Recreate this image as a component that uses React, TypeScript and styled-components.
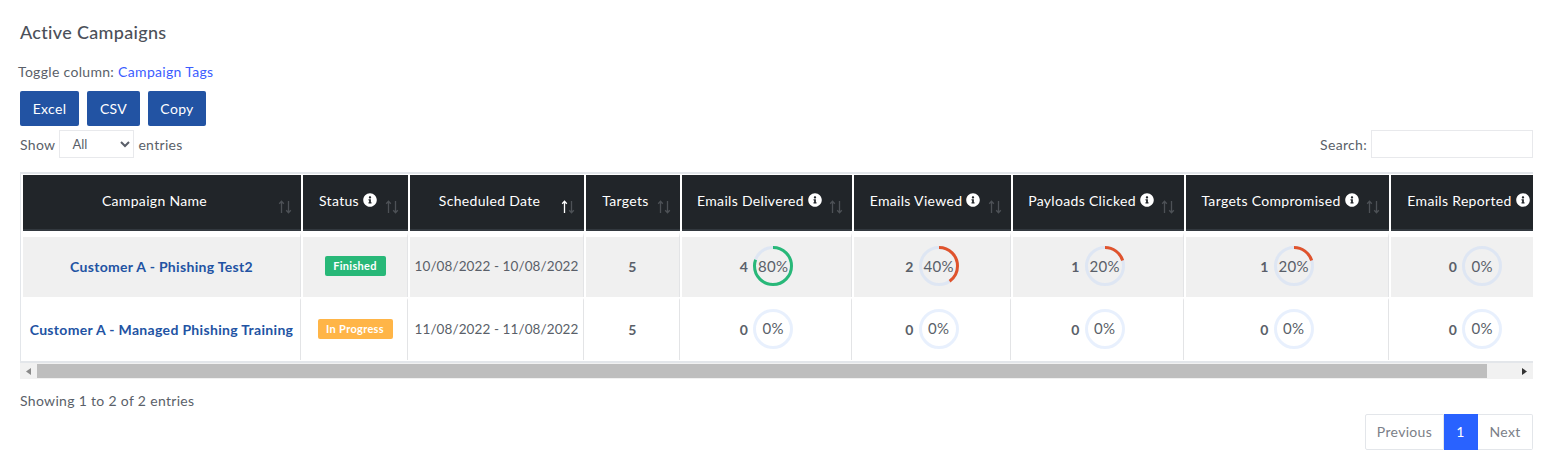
import React from 'react';
import styled, { createGlobalStyle } from 'styled-components';
import { FaInfoCircle } from 'react-icons/fa';

const GlobalStyle = createGlobalStyle`
  html, body {
    margin: 0;
    background: #fff;
  }
  body {
    font-family: Lato, "Liberation Sans", sans-serif;
    font-size: 14px;
    letter-spacing: 0.32px;
    color: #5a5f69;
  }
`;

const Page = styled.div`
  padding: 21px 18px 0 20px;
`;

const Title = styled.h2`
  margin: 0;
  font-size: 18px;
  line-height: 22px;
  font-weight: 500;
  color: #4b5059;
`;

const ToggleRow = styled.div`
  margin: 19px 0 0 -2px;
  line-height: 20px;
`;

const ToggleLink = styled.a`
  color: #3b5cff;
`;

const ButtonRow = styled.div`
  display: flex;
  gap: 8px;
  margin-top: 9px;
`;

const ExportButton = styled.button<{ $width: number }>`
  width: ${p => p.$width}px;
  height: 35px;
  padding: 0;
  border: 0;
  border-radius: 2px;
  background: #2253a3;
  color: #fff;
  font: inherit;
  letter-spacing: inherit;
`;

const Controls = styled.div`
  display: flex;
  justify-content: space-between;
  align-items: center;
  height: 28px;
  margin-top: 4px;
`;

const Label = styled.label`
  display: flex;
  align-items: center;
  gap: 4px;
`;

const PageSize = styled.select`
  width: 75px;
  height: 28px;
  padding: 0 0 0 8px;
  border: 1px solid #e8e9ec;
  background: #fff;
  color: #5a5f69;
  font: inherit;
  font-size: 13px;
`;

const SearchInput = styled.input`
  box-sizing: border-box;
  width: 162px;
  height: 28px;
  border: 1px solid #e8e9ec;
  outline: 0;
`;

const Scroller = styled.div`
  margin-top: 14px;
  border-top: 2px solid #e3e6ea;
  overflow: hidden;
`;

const Table = styled.table`
  table-layout: fixed;
  width: 1542px;
  border-collapse: separate;
  border-left: 1px solid #e3e6ea;
  border-bottom: 2px solid #e3e6ea;
  border-spacing: 2px 1px;
`;

const HeadCell = styled.th<{ $width: number }>`
  position: relative;
  box-sizing: border-box;
  width: ${p => p.$width}px;
  height: 56px;
  padding: 0 25px 4px 10px;
  background: #212529;
  border-bottom: 2px solid #32383e;
  color: #fff;
  font-weight: 400;
  white-space: nowrap;
  text-align: center;
`;

const HeadInfo = styled(FaInfoCircle)`
  margin-left: 4px;
  font-size: 14px;
  vertical-align: -1px;
`;

const SortIcon = styled.svg`
  position: absolute;
  right: 9px;
  top: 25px;
`;

const Row = styled.tr<{ $shaded: boolean }>`
  td {
    background: ${p => (p.$shaded ? '#f0f0f0' : '#fff')};
  }
`;

const Cell = styled.td<{ $top: number }>`
  box-sizing: border-box;
  height: ${p => 60 + p.$top}px;
  padding: 0 4px 2px;
  border-top: ${p => p.$top}px solid #fff;
  border-right: 1px solid #e3e4e6;
  background-clip: padding-box;
  text-align: center;
  white-space: nowrap;
`;

const DateCell = styled(Cell)`
  font-size: 13.5px;
  letter-spacing: 0.1px;
`;

const CampaignLink = styled.a`
  color: #2253a3;
  font-weight: 700;
`;

const Badge = styled.span<{ $color: string; $width: number }>`
  display: inline-block;
  width: ${p => p.$width}px;
  height: 20px;
  border-radius: 2px;
  background: ${p => p.$color};
  color: #fff;
  font-size: 11px;
  font-weight: 700;
  line-height: 20px;
  vertical-align: middle;
`;

const Count = styled.b`
  font-weight: 700;
`;

const StatWrap = styled.div`
  display: flex;
  justify-content: center;
  align-items: center;
  gap: 5px;
`;

const RingBox = styled.div`
  display: grid;
  place-items: center;
  width: 40px;
  height: 40px;

  > * {
    grid-area: 1 / 1;
  }
`;

const RingText = styled.span<{ $lift: boolean }>`
  margin-bottom: ${p => (p.$lift ? 3 : 1)}px;
  font-size: 15px;
`;

const ScrollBar = styled.div`
  display: flex;
  align-items: center;
  height: 16px;
  background: #f1f1f1;
`;

const ScrollArrow = styled.div`
  display: flex;
  justify-content: center;
  align-items: center;
  width: 17px;
  height: 16px;
`;

const ScrollThumb = styled.div`
  width: 1450px;
  height: 14px;
  background: #bebebe;
`;

const ScrollRest = styled.div`
  flex: 1;
`;

const Footer = styled.div`
  margin-top: 12px;
  line-height: 20px;
`;

const Pagination = styled.div`
  display: flex;
  justify-content: flex-end;
  margin-top: 3px;
`;

const PageLink = styled.a<{ $active?: boolean; $width: number }>`
  box-sizing: border-box;
  width: ${p => p.$width}px;
  height: 36px;
  border: 1px solid ${p => (p.$active ? '#2962ff' : '#e3e6ea')};
  border-left-width: ${p => (p.$width === 79 ? 1 : 0)}px;
  background: ${p => (p.$active ? '#2962ff' : '#fff')};
  color: ${p => (p.$active ? '#fff' : '#7b8088')};
  line-height: 34px;
  text-align: center;
  &:first-child {
    border-radius: 2px 0 0 2px;
  }
  &:last-child {
    border-radius: 0 2px 2px 0;
  }
`;

const Sort = ({ active }: { active?: boolean }) => (
  <SortIcon width="14" height="14" viewBox="0 0 14 14" fill="none" strokeWidth="1.3">
    <path d="M3.5 13V1.5M1.2 3.8l2.3-2.5 2.3 2.5" stroke={active ? '#fff' : '#4d5156'} />
    <path d="M10.5 1v11.5M8.2 10.2l2.3 2.5 2.3-2.5" stroke="#4d5156" />
  </SortIcon>
);

const Ring = ({ percent, color, lift }: { percent: number; color: string; lift: boolean }) => {
  const circumference = 2 * Math.PI * 18.5;
  return (
    <RingBox>
      <svg width="40" height="40" viewBox="0 0 40 40">
        <circle cx="20" cy="20" r="18.5" fill="none" stroke="rgba(190,212,250,.35)" strokeWidth="3" />
        <circle
          cx="20"
          cy="20"
          r="18.5"
          fill="none"
          stroke={color}
          strokeWidth="3"
          strokeDasharray={`${(circumference * percent) / 100} ${circumference}`}
          transform="rotate(-90 20 20)"
        />
      </svg>
      <RingText $lift={lift}>{percent}%</RingText>
    </RingBox>
  );
};

const Stat = ({ count, total, color, lift }: { count: number; total: number; color: string; lift: boolean }) => (
  <StatWrap>
    <Count>{count}</Count>
    <Ring percent={(count / total) * 100} color={color} lift={lift} />
  </StatWrap>
);

const columns = [
  { title: 'Campaign Name', width: 278 },
  { title: 'Status', width: 105, info: true },
  { title: 'Scheduled Date', width: 174, active: true },
  { title: 'Targets', width: 94 },
  { title: 'Emails Delivered', width: 170, info: true },
  { title: 'Emails Viewed', width: 157, info: true },
  { title: 'Payloads Clicked', width: 171, info: true },
  { title: 'Targets Compromised', width: 203, info: true },
  { title: 'Emails Reported', width: 170, info: true },
];

const campaigns = [
  {
    name: 'Customer A - Phishing Test2',
    status: 'Finished',
    statusColor: '#28b878',
    statusWidth: 61,
    dates: '10/08/2022 - 10/08/2022',
    targets: 5,
    stats: [4, 2, 1, 1, 0],
  },
  {
    name: 'Customer A - Managed Phishing Training',
    status: 'In Progress',
    statusColor: '#ffb547',
    statusWidth: 75,
    dates: '11/08/2022 - 11/08/2022',
    targets: 5,
    stats: [0, 0, 0, 0, 0],
  },
];

const App: React.FC = () => {
  return (
    <Page>
      <GlobalStyle />
      <Title>Active Campaigns</Title>
      <ToggleRow>
        Toggle column: <ToggleLink>Campaign Tags</ToggleLink>
      </ToggleRow>
      <ButtonRow>
        <ExportButton $width={59}>Excel</ExportButton>
        <ExportButton $width={53}>CSV</ExportButton>
        <ExportButton $width={58}>Copy</ExportButton>
      </ButtonRow>
      <Controls>
        <Label>
          Show
          <PageSize defaultValue="All">
            <option>All</option>
          </PageSize>
          entries
        </Label>
        <Label>
          Search:
          <SearchInput />
        </Label>
      </Controls>
      <Scroller>
        <Table>
          <thead>
            <tr>
              {columns.map(col => (
                <HeadCell key={col.title} $width={col.width}>
                  {col.title}
                  {col.info && <HeadInfo />}
                  <Sort active={col.active} />
                </HeadCell>
              ))}
            </tr>
          </thead>
          <tbody>
            {campaigns.map((c, i) => {
              const first = i === 0;
              const top = first ? 5 : 2;
              return (
                <Row key={c.name} $shaded={first}>
                  <Cell $top={top}>
                    <CampaignLink>{c.name}</CampaignLink>
                  </Cell>
                  <Cell $top={top}>
                    <Badge $color={c.statusColor} $width={c.statusWidth}>
                      {c.status}
                    </Badge>
                  </Cell>
                  <DateCell $top={top}>{c.dates}</DateCell>
                  <Cell $top={top}>
                    <Count>{c.targets}</Count>
                  </Cell>
                  {c.stats.map((count, j) => (
                    <Cell key={j} $top={top}>
                      <Stat
                        count={count}
                        total={c.targets}
                        color={count >= 4 ? '#28b878' : '#e0532c'}
                        lift={!first}
                      />
                    </Cell>
                  ))}
                </Row>
              );
            })}
          </tbody>
        </Table>
      </Scroller>
      <ScrollBar>
        <ScrollArrow>
          <svg width="5" height="7" viewBox="0 0 5 7">
            <path d="M5 0v7L0 3.5z" fill="#8a8a8a" />
          </svg>
        </ScrollArrow>
        <ScrollThumb />
        <ScrollRest />
        <ScrollArrow>
          <svg width="5" height="7" viewBox="0 0 5 7">
            <path d="M0 0v7l5-3.5z" fill="#333" />
          </svg>
        </ScrollArrow>
      </ScrollBar>
      <Footer>Showing 1 to 2 of 2 entries</Footer>
      <Pagination>
        <PageLink $width={79}>Previous</PageLink>
        <PageLink $width={34} $active>
          1
        </PageLink>
        <PageLink $width={55}>Next</PageLink>
      </Pagination>
    </Page>
  );
};

export default App;
